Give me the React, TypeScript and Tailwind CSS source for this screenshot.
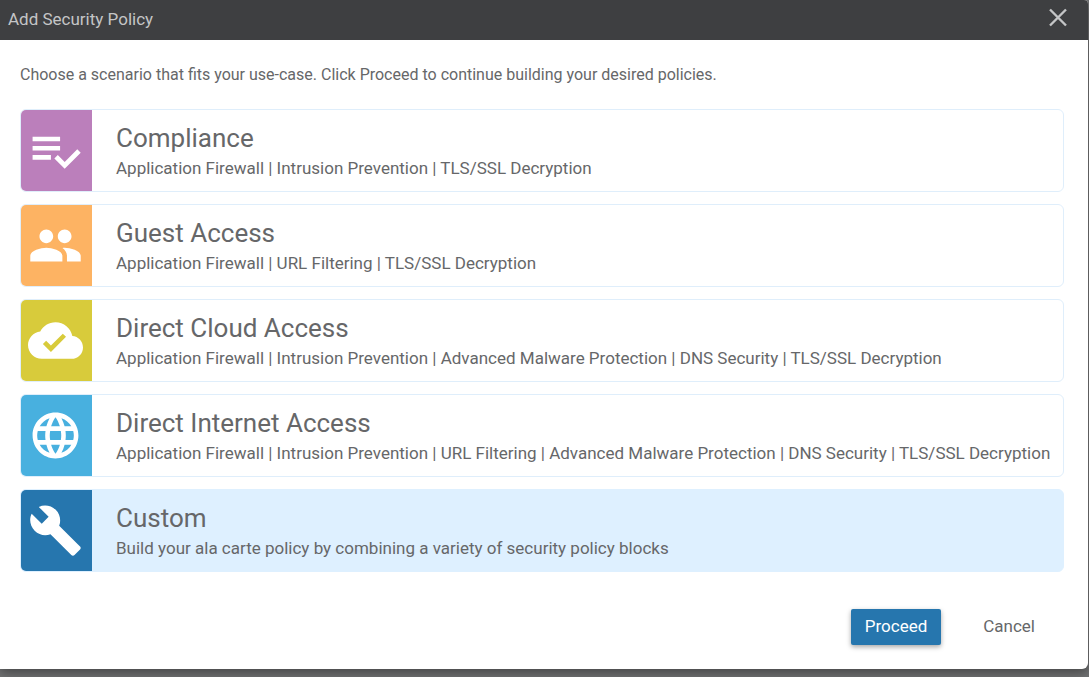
import { useState } from "react";

type Scenario = {
  id: string;
  title: string;
  features: string;
  tile: string;
  icon: string;
};

const scenarios: Scenario[] = [
  {
    id: "compliance",
    title: "Compliance",
    features: "Application Firewall | Intrusion Prevention | TLS/SSL Decryption",
    tile: "bg-[#bb7fbb]",
    icon: "M14 10H2v2h12v-2zm0-4H2v2h12V6zM2 16h8v-2H2v2zm19.5-4.5L23 13l-6.99 7-4.51-4.5L13 14l3.01 3 5.49-5.5z",
  },
  {
    id: "guest-access",
    title: "Guest Access",
    features: "Application Firewall | URL Filtering | TLS/SSL Decryption",
    tile: "bg-[#fdb363]",
    icon: "M16 11c1.66 0 2.99-1.34 2.99-3S17.66 5 16 5c-1.66 0-3 1.34-3 3s1.34 3 3 3zm-8 0c1.66 0 2.99-1.34 2.99-3S9.66 5 8 5C6.34 5 5 6.34 5 8s1.34 3 3 3zm0 2c-2.33 0-7 1.17-7 3.5V19h14v-2.500c0-2.330-4.670-3.500-7-3.500zm8 0c-.29 0-.62.02-.97.05 1.160.84 1.970 1.970 1.970 3.450V19h6v-2.500c0-2.330-4.670-3.500-7-3.500z",
  },
  {
    id: "direct-cloud",
    title: "Direct Cloud Access",
    features:
      "Application Firewall | Intrusion Prevention | Advanced Malware Protection | DNS Security | TLS/SSL Decryption",
    tile: "bg-[#d8cb3b]",
    icon: "M19.350 10.040C18.670 6.590 15.640 4 12 4 9.110 4 6.600 5.640 5.350 8.040 2.340 8.360 0 10.910 0 14c0 3.310 2.690 6 6 6h13c2.760 0 5-2.240 5-5 0-2.640-2.050-4.780-4.650-4.960zM10 17l-3.500-3.500 1.410-1.410L10 14.170 15.180 9l1.410 1.410L10 17z",
  },
  {
    id: "direct-internet",
    title: "Direct Internet Access",
    features:
      "Application Firewall | Intrusion Prevention | URL Filtering | Advanced Malware Protection | DNS Security | TLS/SSL Decryption",
    tile: "bg-[#48b0df]",
    icon: "M11.990 2C6.470 2 2 6.480 2 12s4.470 10 9.990 10C17.520 22 22 17.520 22 12S17.520 2 11.990 2zm6.930 6h-2.950c-.32-1.250-.78-2.450-1.380-3.560 1.840.63 3.370 1.910 4.330 3.560zM12 4.040c.83 1.200 1.480 2.530 1.910 3.960h-3.820c.43-1.430 1.080-2.760 1.910-3.960zM4.260 14C4.100 13.360 4 12.690 4 12s.1-1.360.26-2h3.380c-.08.66-.14 1.320-.14 2 0 .68.06 1.340.14 2H4.260zm.82 2h2.950c.32 1.250.78 2.450 1.380 3.560-1.840-.63-3.370-1.900-4.330-3.560zm2.950-8H5.080c.96-1.660 2.490-2.930 4.330-3.560C8.810 5.550 8.350 6.750 8.030 8zM12 19.960c-.83-1.200-1.480-2.530-1.910-3.960h3.820c-.43 1.430-1.080 2.760-1.910 3.960zM14.340 14H9.660c-.09-.66-.16-1.320-.16-2 0-.68.07-1.350.16-2h4.680c.09.65.16 1.320.16 2 0 .68-.07 1.340-.16 2zm.25 5.560c.6-1.110 1.060-2.310 1.380-3.560h2.950c-.96 1.650-2.490 2.930-4.330 3.560zM16.360 14c.08-.66.14-1.320.14-2 0-.68-.06-1.340-.14-2h3.380c.16.64.26 1.310.26 2s-.1 1.360-.26 2h-3.380z",
  },
  {
    id: "custom",
    title: "Custom",
    features: "Build your ala carte policy by combining a variety of security policy blocks",
    tile: "bg-[#2676ae]",
    icon: "M22.700 19l-9.100-9.100c.9-2.300.4-5-1.500-6.900-2-2-5-2.400-7.400-1.300L9 6 6 9 1.600 4.700C.4 7.100.9 10.100 2.900 12.100c1.900 1.900 4.600 2.400 6.900 1.500l9.100 9.100c.4.4 1 .4 1.400 0l2.300-2.300c.5-.4.5-1.100.1-1.400z",
  },
];

export default function App() {
  const [selected, setSelected] = useState("custom");

  return (
    <div className="flex min-h-screen flex-col bg-[#727374] pr-px pb-2 font-['Roboto',sans-serif] text-[#666769]">
      <section
        role="dialog"
        aria-labelledby="dialog-title"
        className="flex grow flex-col overflow-hidden rounded-tr-sm rounded-br-md bg-white shadow-[0_4px_12px_rgba(0,0,0,0.4)]"
      >
        <header className="flex h-10 items-center justify-between bg-[#3e3f41] pr-5 pl-2 text-[#c4c5c6]">
          <h1 id="dialog-title" className="text-[17px]">
            Add Security Policy
          </h1>
          <button type="button" aria-label="Close" className="flex h-10 w-5 items-start justify-center pt-2">
            <svg viewBox="0 0 20 20" className="size-5" stroke="currentColor" strokeWidth="2.4" fill="none">
              <path d="M2 1.500L18 17.500M18 1.500L2 17.500" />
            </svg>
          </button>
        </header>

        <form className="flex grow flex-col pr-6 pl-5" onSubmit={(e) => e.preventDefault()}>
          <p className="pt-6 text-base leading-[22px]">
            Choose a scenario that fits your use-case. Click Proceed to continue building your desired policies.
          </p>

          <div role="radiogroup" aria-labelledby="dialog-title" className="mt-[23px] flex flex-col gap-3">
            {scenarios.map((s) => (
              <label
                key={s.id}
                className="flex min-h-[83px] cursor-pointer overflow-hidden rounded-md border border-[#dfeefb] bg-white has-checked:border-[#def0ff] has-checked:bg-[#def0ff]"
              >
                <input
                  type="radio"
                  name="scenario"
                  value={s.id}
                  checked={selected === s.id}
                  onChange={() => setSelected(s.id)}
                  className="sr-only"
                />
                <span className={`flex w-[71px] shrink-0 items-center pl-[7px] ${s.tile}`}>
                  <svg viewBox="0 0 24 24" className="size-[55px] fill-white" aria-hidden="true">
                    <path d={s.icon} />
                  </svg>
                </span>
                <span className="flex flex-col justify-center pt-[3px] pl-6">
                  <span className="text-[26px] leading-8">{s.title}</span>
                  <span className="text-[17px] leading-7">{s.features}</span>
                </span>
              </label>
            ))}
          </div>

          <footer className="mt-auto flex justify-end gap-7 pr-[15px] pb-6 text-[17px]">
            <button
              type="submit"
              className="h-9 rounded-xs bg-[#2676ae] px-3.5 text-white shadow-[0_2px_5px_rgba(0,0,0,0.35)]"
            >
              Proceed
            </button>
            <button type="button" className="h-9 px-3.5">
              Cancel
            </button>
          </footer>
        </form>
      </section>
    </div>
  );
}
